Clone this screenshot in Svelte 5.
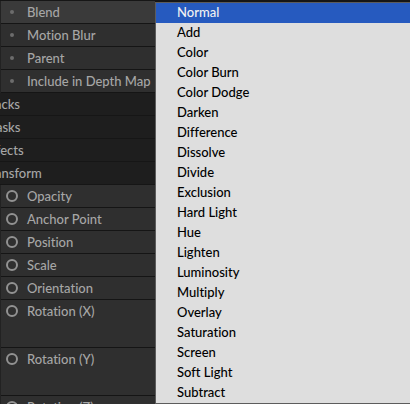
<script lang="ts">
	type Row = {
		label: string
		tall?: boolean
	}

	const general: Row[] = [
		{ label: 'Blend' },
		{ label: 'Motion Blur' },
		{ label: 'Parent' },
		{ label: 'Include in Depth Map' },
	]

	const groups = ['Tracks', 'Masks', 'Effects', 'Transform']

	const transform: Row[] = [
		{ label: 'Opacity' },
		{ label: 'Anchor Point' },
		{ label: 'Position' },
		{ label: 'Scale' },
		{ label: 'Orientation' },
		{ label: 'Rotation (X)', tall: true },
		{ label: 'Rotation (Y)', tall: true },
		{ label: 'Rotation (Z)', tall: true },
	]

	const modes = [
		'Normal',
		'Add',
		'Color',
		'Color Burn',
		'Color Dodge',
		'Darken',
		'Difference',
		'Dissolve',
		'Divide',
		'Exclusion',
		'Hard Light',
		'Hue',
		'Lighten',
		'Luminosity',
		'Multiply',
		'Overlay',
		'Saturation',
		'Screen',
		'Soft Light',
		'Subtract',
	]

	let selected = $state('Normal')
</script>

<div class="inspector">
	<div class="rows">
		{#each general as row, i}
			<div class="row" class:active={i === 0}>
				<span class="icon"><span class="dot"></span></span>
				<span>{row.label}</span>
			</div>
		{/each}
	</div>

	{#each groups as group}
		<div class="group"><span>{group}</span></div>
	{/each}

	<div class="rows">
		{#each transform as row}
			<div class="row" class:tall={row.tall}>
				<button class="icon" aria-label="Keyframe {row.label}">
					<svg width="14" height="14" viewBox="0 0 14 14">
						<circle cx="7" cy="7" r="5" fill="none" stroke="#929292" stroke-width="2" />
					</svg>
				</button>
				<span>{row.label}</span>
			</div>
		{/each}
	</div>

	<div class="menu" role="listbox" aria-label="Blend">
		{#each modes as mode}
			<button
				role="option"
				aria-selected={mode === selected}
				class:selected={mode === selected}
				onclick={() => (selected = mode)}
			>
				{mode}
			</button>
		{/each}
	</div>
</div>

<style>
	:global(body) {
		background: #161616;
	}

	.inspector {
		position: relative;
		box-sizing: border-box;
		height: 100vh;
		padding-top: 1px;
		overflow: hidden;
		background: #161616;
		color: #a6a6a6;
		font: 500 13px/22px Lato, 'Open Sans', sans-serif;
		font-variant-ligatures: none;
	}

	button {
		padding: 0;
		border: 0;
		background: none;
		color: inherit;
		font: inherit;
		font-variant-ligatures: inherit;
	}

	.rows {
		max-width: 154px;
		border-left: 1px solid #222;
	}

	.row {
		display: flex;
		align-items: flex-start;
		gap: 8px;
		height: 22px;
		padding-left: 4px;
		border-bottom: 1px solid #151515;
		background: #2f2f2f;
		white-space: nowrap;

		&.active {
			background: #3a3a3a;
		}

		&.tall {
			height: 47px;
		}
	}

	.icon {
		display: flex;
		align-items: center;
		justify-content: center;
		width: 14px;
		height: 22px;
	}

	.dot {
		width: 4px;
		height: 4px;
		border-radius: 50%;
		background: #6c6c6c;
	}

	.group {
		height: 22px;
		border-bottom: 1px solid #161616;
		background: #1e1e1e;

		span {
			margin-left: -16px;
		}
	}

	.menu {
		position: absolute;
		top: 2px;
		right: 0;
		left: 155px;
		display: flex;
		flex-direction: column;
		border: 1px solid #5c5c5c;
		border-right: 0;
		background: #dedede;
		color: #000;

		button {
			height: 20px;
			padding: 0 0 2px 21px;
			line-height: 18px;
			text-align: left;
		}

		.selected {
			background: #265abf;
			color: #f2f2f2;
		}
	}
</style>
